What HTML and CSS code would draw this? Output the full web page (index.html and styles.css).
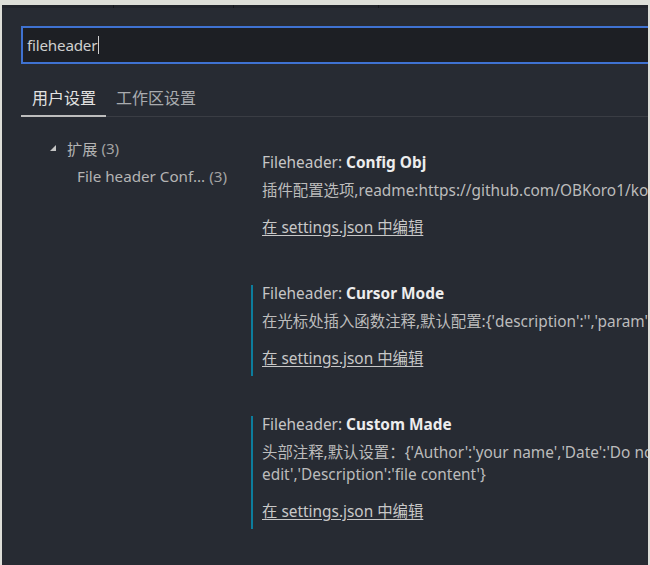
FILE: index.html
```html
<!DOCTYPE html>
<html lang="zh-CN">
<head>
<meta charset="utf-8">
<title>Settings</title>
<link rel="stylesheet" href="styles.css">
</head>
<body>
<div class="window">
  <div class="panel">
    <div class="tabstrip">
      <span class="tick t1"></span><span class="tick t2"></span><span class="tick t3"></span>
    </div>
    <div class="search">
      <span class="search-text">fileheader</span><span class="caret"></span>
    </div>
    <div class="tabs">
      <div class="tab active">用户设置</div>
      <div class="tab">工作区设置</div>
    </div>
    <div class="content">
      <div class="tree">
        <div class="tree-row level1"><span class="twistie"></span><span class="label">扩展</span> <span class="count">(3)</span></div>
        <div class="tree-row level2"><span class="label">File header Conf...</span> <span class="count">(3)</span></div>
      </div>
      <div class="settings">
        <div class="setting">
          <div class="setting-title">Fileheader: <b>Config Obj</b></div>
          <div class="setting-desc single">插件配置选项,readme:https://github.com/OBKoro1/koro1FileHeader</div>
          <a class="setting-link">在 settings.json 中编辑</a>
        </div>
        <div class="setting modified">
          <div class="setting-title">Fileheader: <b>Cursor Mode</b></div>
          <div class="setting-desc single">在光标处插入函数注释,默认配置:{'description':'','param':{'params':''},'return':''}</div>
          <a class="setting-link">在 settings.json 中编辑</a>
        </div>
        <div class="setting modified">
          <div class="setting-title">Fileheader: <b>Custom Made</b></div>
          <div class="setting-desc">头部注释,默认设置：{'Author':'your name','Date':'Do not edit','Description':'file content'}</div>
          <a class="setting-link">在 settings.json 中编辑</a>
        </div>
      </div>
    </div>
  </div>
</div>
</body>
</html>
```

FILE: styles.css
```css
html, body {
  margin: 0;
  padding: 0;
  width: 650px;
  height: 565px;
  overflow: hidden;
  background: #dedfd9;
}

.window {
  box-sizing: border-box;
  width: 650px;
  height: 565px;
  padding: 5px 2px 0 2px;
}

.panel {
  height: 560px;
  background: #272b33;
  overflow: hidden;
  font-family: "Noto Sans", "Noto Sans CJK SC", sans-serif;
  font-size: 15.4px;
  color: #bbbbbb;
}

.tabstrip {
  position: relative;
  height: 3px;
  background: #22252c;
}

.tick {
  position: absolute;
  top: 0;
  width: 1px;
  height: 3px;
  background: #15171b;
}
.t1 { left: 111px; }
.t2 { left: 231px; }
.t3 { left: 376px; }

.search {
  display: flex;
  align-items: center;
  box-sizing: border-box;
  height: 38px;
  margin: 18px 0 0 19px;
  padding-left: 4px;
  background: #1d1f24;
  border: 2px solid #3f72d1;
  border-right: none;
}

.search-text {
  font-size: 15.2px;
  color: #cfcfcf;
  letter-spacing: -0.2px;
}

.caret {
  width: 1px;
  height: 18px;
  margin-left: 1px;
  background: #d0d0d0;
}

.tabs {
  display: flex;
  margin: 17px 0 0 19px;
  border-bottom: 1px solid #3a3d44;
  height: 35px;
}

.tab {
  box-sizing: border-box;
  height: 36px;
  padding: 4px 10px 0 10px;
  font-size: 16px;
  color: #a9abaf;
}

.tab.active {
  padding-left: 11px;
  color: #e2e2e2;
  border-bottom: 2px solid #bdbdbd;
}

.content {
  display: flex;
}

.tree {
  flex: none;
  width: 230px;
  padding-top: 17px;
}

.tree-row {
  display: flex;
  align-items: center;
  height: 28px;
  color: #b4b4b4;
  font-size: 15.2px;
  white-space: nowrap;
}

.tree-row .count {
  margin-left: 4px;
  color: #a3a3a3;
}

.level1 { padding-left: 48px; }
.level2 { padding-left: 75px; }

.twistie {
  width: 0;
  height: 0;
  margin-right: 11px;
  border-left: 6px solid transparent;
  border-bottom: 6px solid #c4c4c4;
}

.settings {
  flex: none;
  width: 480px;
  padding-top: 37px;
  margin-left: 19px;
}

.setting {
  border-left: 2px solid transparent;
  padding: 0 0 7px 9px;
  margin-bottom: 40px;
}

.setting.modified {
  border-left-color: #0c7d9d;
}

.setting-title {
  line-height: 18px;
  color: #c6c6c6;
}

.setting-title b {
  color: #ededed;
  font-weight: 700;
}

.setting-desc {
  margin-top: 8px;
  line-height: 22px;
  color: #bcbcbc;
  word-break: keep-all;
}

.setting-desc.single {
  white-space: nowrap;
}

.setting-link {
  display: block;
  margin-top: 16px;
  line-height: 20px;
  color: #c8c8c8;
  text-decoration: underline;
  text-underline-offset: 2px;
}
```
